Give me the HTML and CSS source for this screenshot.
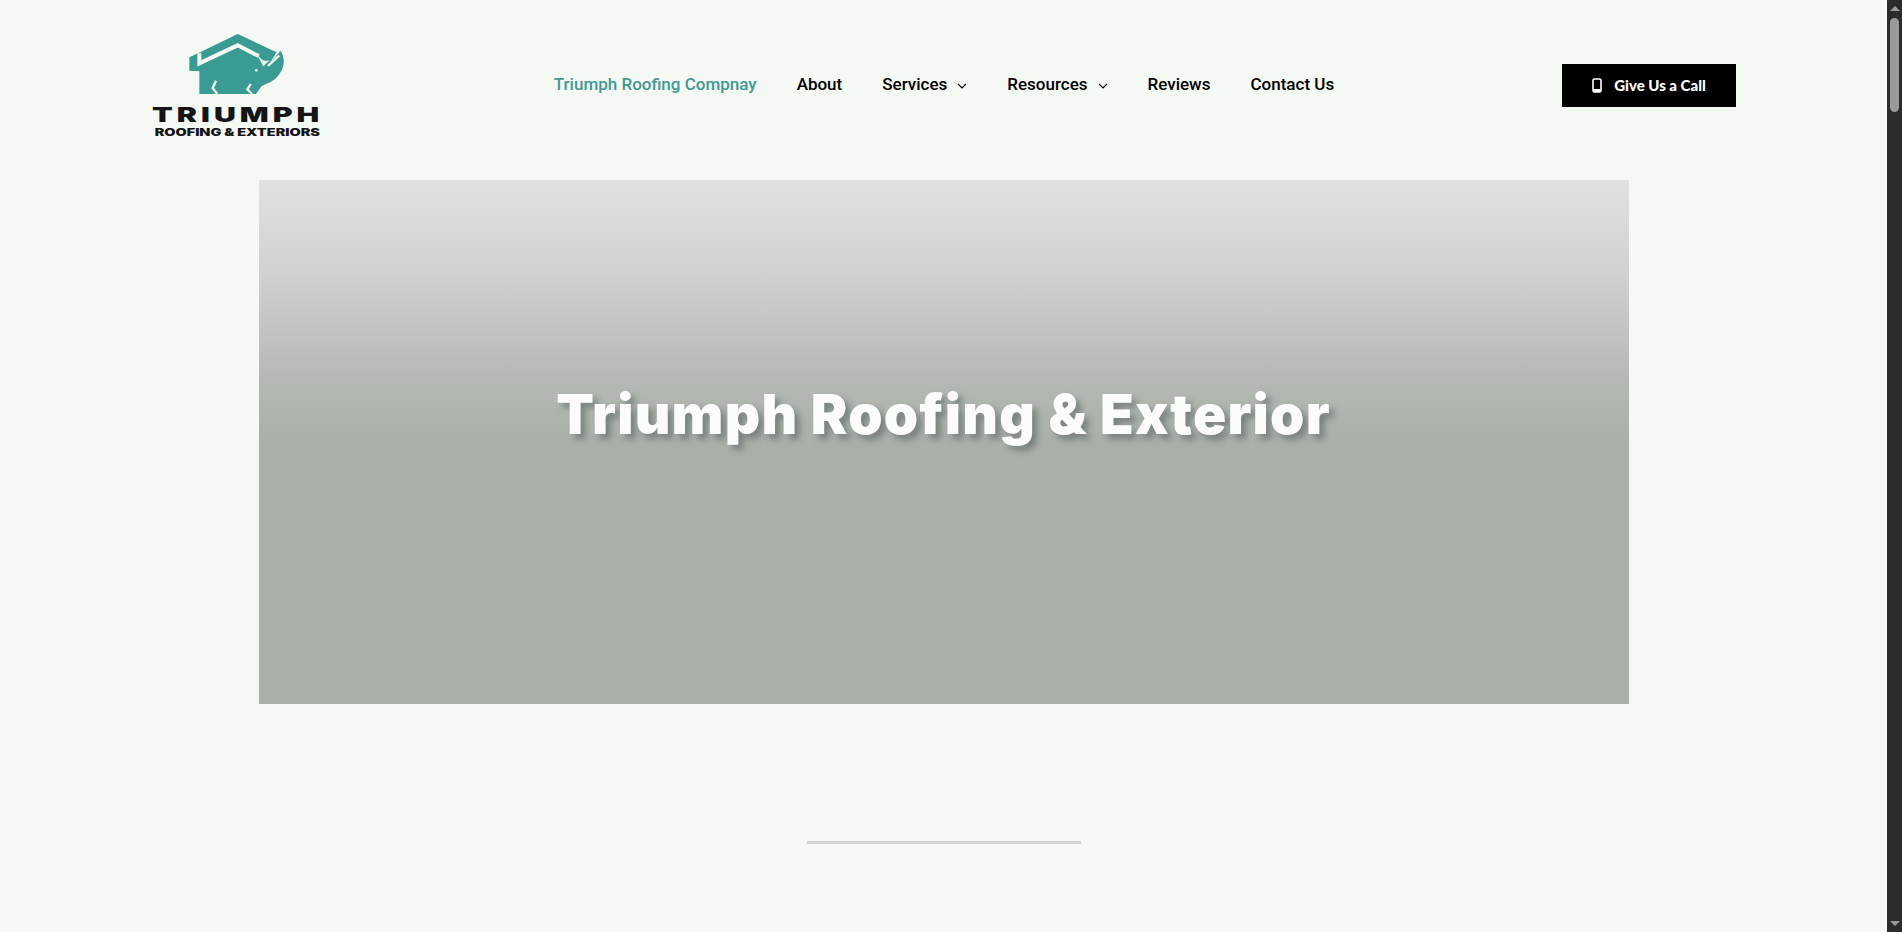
FILE: index.html
```html
<!DOCTYPE html>
<html>
	<head>
		<title>Triumph Roofing &amp; Exteriors</title>
		<meta name="viewport" content="width=device-width" />
		<link rel="stylesheet" href="styles.css">
	</head>
	<body>

		<div class="page">

			<header class="header">
				<a class="logo" href="#">
					<svg width="171" height="104" viewBox="63 39 513 312">
						<path class="logo-teal" d="M323 42 L440 97 L420 128 L452 92 C468 118 464 152 434 178 C420 190 402 192 392 202 L378 222 L208 222 L208 154 L178 152 L178 112 L207 98 Z" />
						<path class="logo-cut" d="M208 100 V130 L323 76 L386 108" />
						<path class="logo-cut ear" d="M384 106 C394 122 404 126 416 122 L400 138 Z" />
						<path class="logo-cut thin" d="M414 138 L448 106" />
						<path class="logo-cut thin" d="M258 182 L248 204 L262 222 M362 192 L352 208 L366 222" />
						<circle class="logo-eye" cx="379" cy="151" r="4" />
						<text class="logo-name" x="66" y="305" textLength="514" lengthAdjust="spacingAndGlyphs">TRIUMPH</text>
						<text class="logo-sub" x="74" y="347" textLength="496" lengthAdjust="spacingAndGlyphs">ROOFING &amp; EXTERIORS</text>
					</svg>
				</a>

				<nav class="nav">
					<a class="nav-link active" href="#">Triumph Roofing Compnay</a>
					<a class="nav-link" href="#">About</a>
					<a class="nav-link" href="#">Services
						<svg class="chevron" width="10" height="6" viewBox="0 0 10 6"><path d="M1 1 L5 5 L9 1" /></svg>
					</a>
					<a class="nav-link" href="#">Resources
						<svg class="chevron" width="10" height="6" viewBox="0 0 10 6"><path d="M1 1 L5 5 L9 1" /></svg>
					</a>
					<a class="nav-link" href="#">Reviews</a>
					<a class="nav-link" href="#">Contact Us</a>
				</nav>

				<a class="call" href="#">
					<svg width="10" height="15" viewBox="0 0 10 15">
						<rect x="1" y="1" width="8" height="13" rx="1.5" fill="none" stroke="#fff" stroke-width="1.6" />
						<rect x="1" y="11" width="8" height="3" fill="#fff" />
					</svg>
					Give Us a Call
				</a>
			</header>

			<section class="hero">
				<h1 class="hero-title">Triumph Roofing &amp; Exterior</h1>
			</section>

			<div class="divider"></div>

		</div>

		<div class="scrollbar">
			<span class="arrow up"></span>
			<span class="thumb"></span>
			<span class="arrow down"></span>
		</div>

	</body>
</html>
```

FILE: styles.css
```css
* {
	margin: 0;
	padding: 0;
	box-sizing: border-box;
}

html, body {
	height: 100%;
	overflow: hidden;
	background: #f4f9f4;
	font-family: Roboto, "Liberation Sans", sans-serif;
}

body {
	display: flex;
}

a {
	text-decoration: none;
	color: inherit;
}

.page {
	flex: 1;
	min-width: 0;
}

.header {
	display: flex;
	align-items: center;
	justify-content: space-between;
	height: 180px;
	padding: 0 151px;
}

.logo {
	display: block;
	height: 104px;
	margin-top: -10px;
}

.logo-teal {
	fill: #3a9a94;
}

.logo-cut {
	fill: none;
	stroke: #f4f9f4;
	stroke-width: 12;
}

.logo-cut.ear {
	fill: #f4f9f4;
	stroke-width: 2;
}

.logo-cut.thin {
	stroke-width: 7;
}

.logo-eye {
	fill: #f4f9f4;
}

.logo-name, .logo-sub {
	font-family: Inter, "Liberation Sans", sans-serif;
	font-weight: 900;
	fill: #151515;
}

.logo-name {
	font-size: 60px;
	letter-spacing: 8px;
}

.logo-sub {
	font-size: 30px;
}

.nav {
	display: flex;
	align-items: center;
	gap: 40px;
	margin-top: -12px;
	margin-left: 4px;
}

.nav-link {
	display: flex;
	align-items: center;
	gap: 5px;
	color: #000;
	font-size: 17px;
	font-weight: 500;
}

.nav-link.active {
	color: #3f9a94;
}

.chevron {
	margin-top: 3px;
	margin-left: 5px;
}

.chevron path {
	fill: none;
	stroke: #000;
	stroke-width: 1.2;
}

.call {
	display: flex;
	align-items: center;
	justify-content: center;
	gap: 12px;
	width: 174px;
	height: 43px;
	margin-top: -9px;
	padding-bottom: 1px;
	background: #000;
	color: #fff;
	font-family: Lato, "Liberation Sans", sans-serif;
	font-size: 15px;
	font-weight: 900;
}

.hero {
	display: flex;
	justify-content: center;
	width: 1370px;
	height: 524px;
	margin: 0 auto;
	padding-top: 201px;
	background: linear-gradient(to bottom, #dfe3de 0%, #cdd2cc 18%, #b4bab3 38%, #a9b0a8 50%, #a9b0a8 100%);
}

.hero-title {
	color: #fbfcfb;
	font-family: Inter, "Liberation Sans", sans-serif;
	font-size: 55px;
	font-weight: 900;
	letter-spacing: 1.25px;
	line-height: 66px;
	white-space: nowrap;
	text-shadow: 5px 5px 6px rgba(60, 70, 70, 0.45);
}

.divider {
	width: 274px;
	height: 3px;
	margin: 137px auto 0;
	background: #d2d6d0;
}

.scrollbar {
	display: flex;
	flex-direction: column;
	align-items: center;
	flex: none;
	width: 15px;
	height: 100%;
	padding: 6px 0;
	background: #2c2c2c;
}

.arrow {
	width: 0;
	height: 0;
	border-left: 5px solid transparent;
	border-right: 5px solid transparent;
}

.arrow.up {
	border-bottom: 5px solid #9a9a9a;
}

.arrow.down {
	margin-top: auto;
	border-top: 5px solid #9a9a9a;
}

.thumb {
	width: 9px;
	height: 94px;
	margin-top: 7px;
	border-radius: 5px;
	background: #9a9a9a;
}
```
